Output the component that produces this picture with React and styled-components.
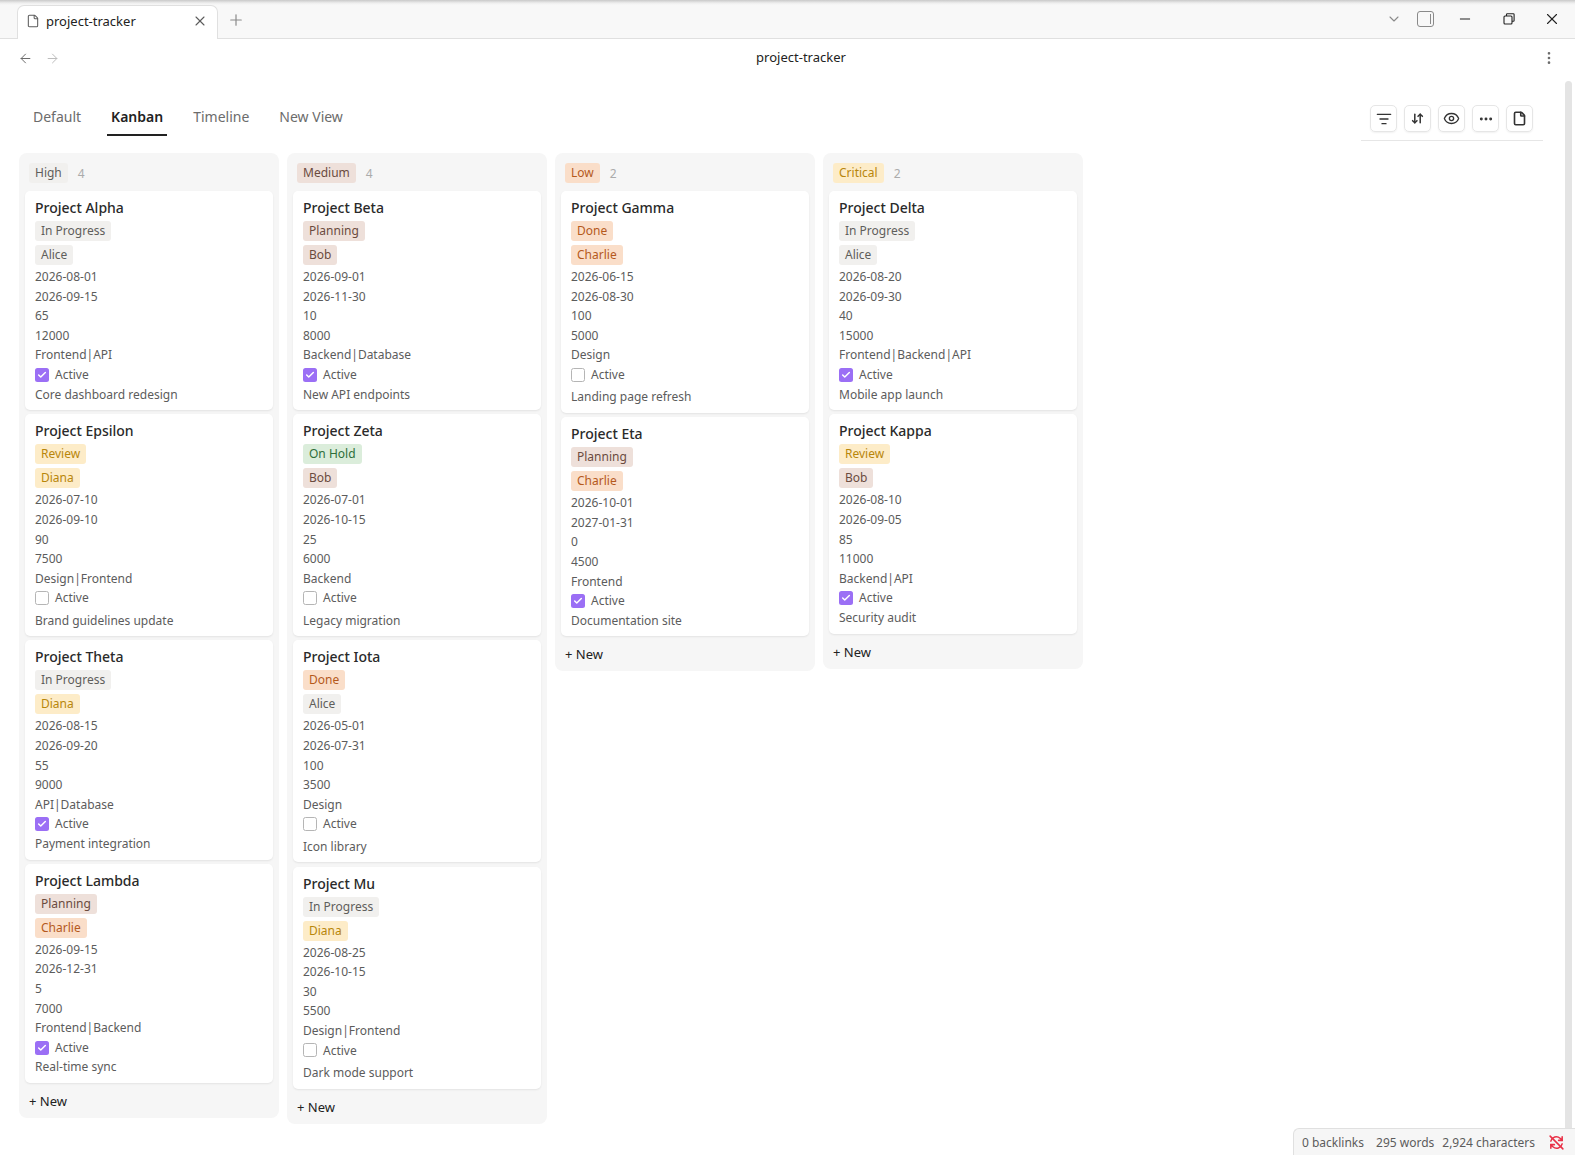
import React from 'react';
import styled, { createGlobalStyle } from 'styled-components';
import { X, Plus, ArrowLeft, ArrowRight, ChevronDown, Minus, EllipsisVertical, Ellipsis, File, ListFilter, ArrowDownUp, Eye, Check } from 'lucide-react';

const GlobalStyle = createGlobalStyle`
  html, body { margin: 0; padding: 0; height: 100%; background: #fff; }
  body { font-family: "Noto Sans", sans-serif; color: #222; overflow: hidden; }
  #root { height: 100%; }
`;

const tagColors = {
  gray: { bg: '#f1f0ee', fg: '#5f5e5b' },
  brown: { bg: '#eee0da', fg: '#6b4b3e' },
  orange: { bg: '#fadec9', fg: '#b5591c' },
  yellow: { bg: '#fdecc8', fg: '#b8860b' },
  green: { bg: '#dbeddb', fg: '#2f6f3a' },
};

const statusColor = { 'In Progress': 'gray', Planning: 'brown', Done: 'orange', Review: 'yellow', 'On Hold': 'green' };
const ownerColor = { Alice: 'gray', Bob: 'brown', Charlie: 'orange', Diana: 'yellow' };

const columns = [
  {
    name: 'High', color: 'gray', cards: [
      ['Project Alpha', 'In Progress', 'Alice', '2026-08-01', '2026-09-15', '65', '12000', 'Frontend|API', true, 'Core dashboard redesign'],
      ['Project Epsilon', 'Review', 'Diana', '2026-07-10', '2026-09-10', '90', '7500', 'Design|Frontend', false, 'Brand guidelines update'],
      ['Project Theta', 'In Progress', 'Diana', '2026-08-15', '2026-09-20', '55', '9000', 'API|Database', true, 'Payment integration'],
      ['Project Lambda', 'Planning', 'Charlie', '2026-09-15', '2026-12-31', '5', '7000', 'Frontend|Backend', true, 'Real-time sync'],
    ],
  },
  {
    name: 'Medium', color: 'brown', cards: [
      ['Project Beta', 'Planning', 'Bob', '2026-09-01', '2026-11-30', '10', '8000', 'Backend|Database', true, 'New API endpoints'],
      ['Project Zeta', 'On Hold', 'Bob', '2026-07-01', '2026-10-15', '25', '6000', 'Backend', false, 'Legacy migration'],
      ['Project Iota', 'Done', 'Alice', '2026-05-01', '2026-07-31', '100', '3500', 'Design', false, 'Icon library'],
      ['Project Mu', 'In Progress', 'Diana', '2026-08-25', '2026-10-15', '30', '5500', 'Design|Frontend', false, 'Dark mode support'],
    ],
  },
  {
    name: 'Low', color: 'orange', cards: [
      ['Project Gamma', 'Done', 'Charlie', '2026-06-15', '2026-08-30', '100', '5000', 'Design', false, 'Landing page refresh'],
      ['Project Eta', 'Planning', 'Charlie', '2026-10-01', '2027-01-31', '0', '4500', 'Frontend', true, 'Documentation site'],
    ],
  },
  {
    name: 'Critical', color: 'yellow', cards: [
      ['Project Delta', 'In Progress', 'Alice', '2026-08-20', '2026-09-30', '40', '15000', 'Frontend|Backend|API', true, 'Mobile app launch'],
      ['Project Kappa', 'Review', 'Bob', '2026-08-10', '2026-09-05', '85', '11000', 'Backend|API', true, 'Security audit'],
    ],
  },
];

const Window = styled.div`
  height: 100vh;
  display: flex;
  flex-direction: column;
  position: relative;
  overflow: hidden;
`;

const TabBar = styled.div`
  height: 39px;
  flex: none;
  box-sizing: border-box;
  display: flex;
  align-items: flex-end;
  padding-left: 17px;
  background: linear-gradient(to bottom, #c9c9c9 0, #eeeeee 3px, #f8f8f8 5px);
  border-bottom: 1px solid #e0e0e0;
`;

const Tab = styled.div`
  width: 201px;
  height: 34px;
  box-sizing: border-box;
  margin-bottom: -1px;
  padding: 0 9px 3px 8px;
  display: flex;
  align-items: center;
  gap: 6px;
  background: #fff;
  border: 1px solid #e0e0e0;
  border-bottom: none;
  border-radius: 7px 7px 0 0;
  font-size: 13px;
  color: #222;
  svg { flex: none; color: #5c5c5c; }
  span { flex: 1; }
`;

const NewTab = styled.div`
  margin: 0 0 9px 9px;
  display: flex;
  color: #8a8a8a;
`;

const WindowControls = styled.div`
  margin-left: auto;
  height: 38px;
  display: flex;
  align-items: center;
  padding: 0 14px 0 0;
  color: #222;
`;

const PanelIcon = styled.div`
  width: 17px;
  height: 16px;
  margin: 0 23px 0 15px;
  box-sizing: border-box;
  border: 1.5px solid #8a8a8a;
  border-radius: 3px;
  display: flex;
  justify-content: flex-end;
  padding: 2px 2px;
  &::after { content: ''; width: 1.5px; background: #8a8a8a; }
`;

const NavRow = styled.div`
  height: 38px;
  flex: none;
  display: flex;
  align-items: center;
  padding: 0 18px 0 18px;
  gap: 12px;
  color: #6c6c6c;
`;

const NavTitle = styled.div`
  flex: 1;
  text-align: center;
  font-size: 13px;
  color: #222;
  padding: 0 0 2px 1px;
`;

const Content = styled.div`
  flex: 1;
  padding: 0 32px 0 19px;
  min-height: 0;
`;

const ViewBar = styled.div`
  height: 76px;
  display: flex;
  justify-content: space-between;
`;

const Tabs = styled.div`
  display: flex;
  gap: 22px;
  padding: 22px 0 0 10px;
  height: 31px;
`;

const ViewTab = styled.div`
  padding: 8px 4px 0;
  box-sizing: border-box;
  height: 37px;
  font-size: 14px;
  line-height: 20px;
  font-weight: ${p => (p.$active ? 600 : 400)};
  color: ${p => (p.$active ? '#222' : '#6c6c6c')};
  border-bottom: ${p => (p.$active ? '2px solid #222' : 'none')};
`;

const Tools = styled.div`
  align-self: flex-start;
  margin: 28px 0 0;
  padding: 0 10px 8px 9px;
  display: flex;
  gap: 7px;
  border-bottom: 1px solid #e6e6e6;
`;

const ToolButton = styled.div`
  width: 27px;
  height: 27px;
  box-sizing: border-box;
  display: flex;
  align-items: center;
  justify-content: center;
  border: 1px solid #e6e6e6;
  border-radius: 5px;
  box-shadow: 0 1px 2px rgba(0, 0, 0, 0.06);
  color: #333;
`;

const Board = styled.div`
  display: flex;
  align-items: flex-start;
  gap: 8px;
`;

const Column = styled.div`
  width: 260px;
  box-sizing: border-box;
  padding: 10px 6px 6px;
  background: #f6f6f6;
  border-radius: 8px;
`;

const ColumnHead = styled.div`
  height: 20px;
  margin-bottom: 8px;
  padding-left: 4px;
  display: flex;
  align-items: center;
  gap: 10px;
`;

const Count = styled.span`
  font-size: 12px;
  color: #ababab;
`;

const Tag = styled.span`
  display: inline-block;
  height: 20px;
  line-height: 20px;
  padding: 0 6px;
  border-radius: 3px;
  font-size: 12px;
  background: ${p => tagColors[p.$color].bg};
  color: ${p => tagColors[p.$color].fg};
`;

const Card = styled.div`
  background: #fff;
  border-radius: 5px;
  padding: 6px 10px;
  margin-bottom: 4.2px;
  box-shadow: 0 1px 2px rgba(0, 0, 0, 0.08);
`;

const CardTitle = styled.div`
  font-size: 14px;
  font-weight: 500;
  line-height: 22px;
  color: #2a2a2a;
`;

const TagRow = styled.div`
  height: 24px;
  display: flex;
  align-items: center;
`;

const Field = styled.div`
  font-size: 12px;
  line-height: 19.6px;
  height: 19.6px;
  color: #5c5c5c;
`;

const CheckRow = styled.label`
  display: flex;
  align-items: center;
  gap: 6px;
  font-size: 12px;
  height: 19.6px;
  margin-bottom: ${p => (p.$checked ? '0' : '2.8px')};
  line-height: 19.6px;
  color: #5c5c5c;
`;

const Box = styled.span`
  width: 14px;
  height: 14px;
  box-sizing: border-box;
  flex: none;
  border-radius: 2.5px;
  display: flex;
  align-items: center;
  justify-content: center;
  color: #fff;
  background: ${p => (p.$checked ? '#9b6ff5' : '#fff')};
  border: ${p => (p.$checked ? 'none' : '1px solid #b5b5b5')};
`;

const NewRow = styled.div`
  font-size: 13px;
  line-height: 20px;
  color: #222;
  padding: 4px 4px 1px;
`;

const Scrollbar = styled.div`
  position: absolute;
  top: 81px;
  right: 3px;
  width: 7px;
  height: 1050px;
  border-radius: 4px 4px 0 0;
  background: #e4e4e4;
`;

const StatusBar = styled.div`
  position: absolute;
  right: 0;
  bottom: 0;
  height: 27px;
  width: 282px;
  box-sizing: border-box;
  padding-left: 8px;
  display: flex;
  align-items: center;
  font-size: 12px;
  color: #5c5c5c;
  background: #f6f6f6;
  border: 1px solid #e0e0e0;
  border-width: 1px 0 0 1px;
  border-radius: 6px 0 0 0;
`;

const Stat = styled.span`
  margin-right: ${p => p.$gap}px;
`;

const SyncOff = () => (
  <svg width="17" height="17" viewBox="0 0 24 24" fill="none" stroke="#e93147" strokeWidth="2.2" strokeLinecap="round" strokeLinejoin="round">
    <path d="M3 3l18 18" />
    <path d="M4 10a8 8 0 0 1 13-4l3 3V4" />
    <path d="M20 14a8 8 0 0 1-13 4l-3-3v5" />
    <path d="M15 9h5" />
    <path d="M4 15h5" />
  </svg>
);

const ProjectCard = ({ card }) => {
  const [title, status, owner, start, end, progress, budget, tags, active, note] = card;
  return (
    <Card>
      <CardTitle>{title}</CardTitle>
      <TagRow><Tag $color={statusColor[status]}>{status}</Tag></TagRow>
      <TagRow><Tag $color={ownerColor[owner]}>{owner}</Tag></TagRow>
      <Field>{start}</Field>
      <Field>{end}</Field>
      <Field>{progress}</Field>
      <Field>{budget}</Field>
      <Field>{tags}</Field>
      <CheckRow $checked={active}>
        <Box $checked={active}>{active && <Check size={10} strokeWidth={3.5} />}</Box>
        Active
      </CheckRow>
      <Field>{note}</Field>
    </Card>
  );
};

export default function App() {
  return (
    <Window>
      <GlobalStyle />
      <TabBar>
        <Tab>
          <File size={14} strokeWidth={1.8} />
          <span>project-tracker</span>
          <X size={16} strokeWidth={1.6} color="#5c5c5c" />
        </Tab>
        <NewTab><Plus size={18} strokeWidth={1.6} /></NewTab>
        <WindowControls>
          <ChevronDown size={16} strokeWidth={1.6} color="#8a8a8a" />
          <PanelIcon />
          <Minus size={16} strokeWidth={1.5} />
          <svg width="14" height="14" viewBox="0 0 14 14" fill="none" stroke="#222" strokeWidth="1.1" style={{ margin: '0 17px 0 29px' }}>
            <rect x="2" y="4" width="8" height="8" rx="1" />
            <path d="M4.5 4V2.5a.8.8 0 0 1 .8-.8h6a.8.8 0 0 1 .8.8v6a.8.8 0 0 1-.8.8H10" />
          </svg>
          <X size={18} strokeWidth={1.5} style={{ marginLeft: 10 }} />
        </WindowControls>
      </TabBar>
      <NavRow>
        <ArrowLeft size={15} strokeWidth={1.6} />
        <ArrowRight size={15} strokeWidth={1.6} color="#bdbdbd" />
        <NavTitle>project-tracker</NavTitle>
        <EllipsisVertical size={16} strokeWidth={2} />
      </NavRow>
      <Content>
        <ViewBar>
          <Tabs>
            <ViewTab>Default</ViewTab>
            <ViewTab $active>Kanban</ViewTab>
            <ViewTab>Timeline</ViewTab>
            <ViewTab>New View</ViewTab>
          </Tabs>
          <Tools>
            <ToolButton><ListFilter size={16} strokeWidth={2} /></ToolButton>
            <ToolButton><ArrowDownUp size={13} strokeWidth={2.8} /></ToolButton>
            <ToolButton><Eye size={17} strokeWidth={1.9} /></ToolButton>
            <ToolButton><Ellipsis size={16} strokeWidth={2.4} /></ToolButton>
            <ToolButton><File size={15} strokeWidth={2.6} /></ToolButton>
          </Tools>
        </ViewBar>
        <Board>
          {columns.map(col => (
            <Column key={col.name}>
              <ColumnHead>
                <Tag $color={col.color}>{col.name}</Tag>
                <Count>{col.cards.length}</Count>
              </ColumnHead>
              {col.cards.map(card => <ProjectCard key={card[0]} card={card} />)}
              <NewRow>+ New</NewRow>
            </Column>
          ))}
        </Board>
      </Content>
      <Scrollbar />
      <StatusBar>
        <Stat $gap={12}>0 backlinks</Stat>
        <Stat $gap={8}>295 words</Stat>
        <Stat $gap={13}>2,924 characters</Stat>
        <SyncOff />
      </StatusBar>
    </Window>
  );
}
